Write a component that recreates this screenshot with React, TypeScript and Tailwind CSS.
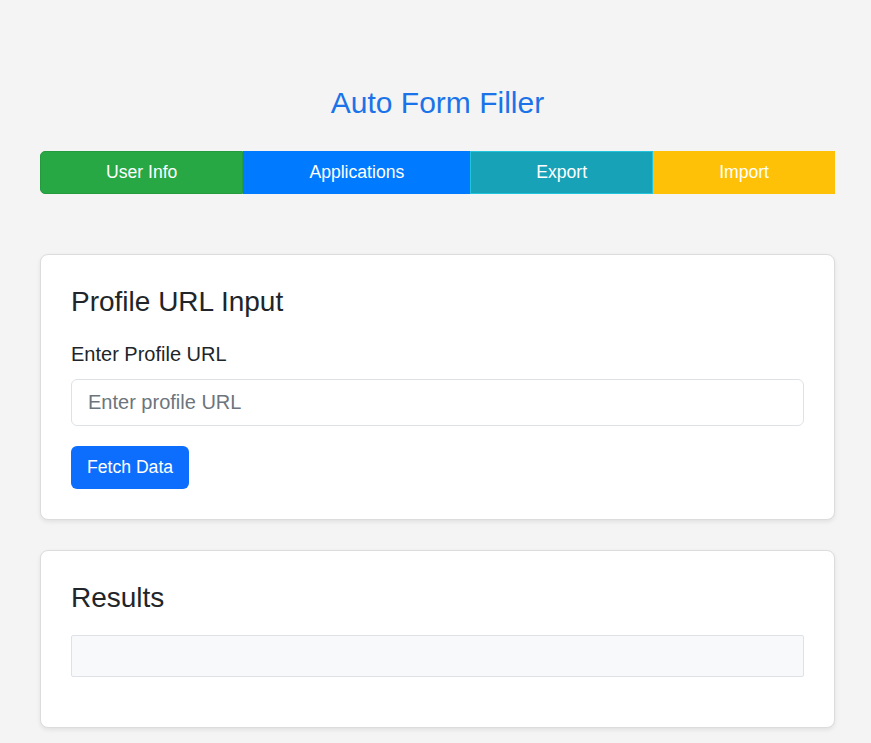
import { useState } from 'react';

const tabs = [
  { label: 'User Info', cls: 'bg-[#28a745] border-[#259b40] rounded-l-[5px]' },
  { label: 'Applications', cls: 'bg-[#007bff] border-[#007bff]' },
  { label: 'Export', cls: 'bg-[#17a2b8] border-[#22c3dc]' },
  { label: 'Import', cls: 'bg-[#ffc107] border-[#ffc107]' },
];

export default function App() {
  const [url, setUrl] = useState('');

  return (
    <div className="min-h-screen bg-[#f4f4f4] font-['Liberation_Sans',Arial,sans-serif] text-[#212529]">
      <div className="ml-[40px] w-[795px] pt-[85px] pb-[16px]">
        <h1 className="text-center text-[30px] leading-[36px] text-[#1a73e8]">Auto Form Filler</h1>

        {/* Tab bar */}
        <div className="mt-[30px] flex h-[43px]">
          {tabs.map((t) => (
            <button
              key={t.label}
              className={`flex-auto border px-4 text-[17.6px] text-white ${t.cls}`}
            >
              {t.label}
            </button>
          ))}
        </div>

        {/* Profile URL card */}
        <div className="mt-[60px] rounded-[8px] border border-[#dcdcdc] bg-white p-[30px] shadow-[0_2px_4px_rgba(0,0,0,0.08)]">
          <h2 className="text-[28px] leading-[34px]">Profile URL Input</h2>
          <label className="mt-[20px] block text-[20px] leading-[30px]">Enter Profile URL</label>
          <input
            type="text"
            value={url}
            onChange={(e) => setUrl(e.target.value)}
            placeholder="Enter profile URL"
            className="mt-[10px] block h-[47px] w-full rounded-[6px] border border-[#dee2e6] px-[16px] text-[20px] placeholder-[#6c757d] focus:outline-none"
          />
          <button className="mt-[20px] h-[43px] rounded-[6px] bg-[#0d6efd] px-[16px] text-[17.6px] text-white">
            Fetch Data
          </button>
        </div>

        {/* Results card */}
        <div className="mt-[30px] rounded-[8px] border border-[#dcdcdc] bg-white px-[30px] pt-[30px] pb-[50px] shadow-[0_2px_4px_rgba(0,0,0,0.08)]">
          <h2 className="text-[28px] leading-[34px]">Results</h2>
          <div className="mt-[20px] h-[42px] rounded-[2px] border border-[#dee2e6] bg-[#f8f9fa]" />
        </div>
      </div>
    </div>
  );
}
